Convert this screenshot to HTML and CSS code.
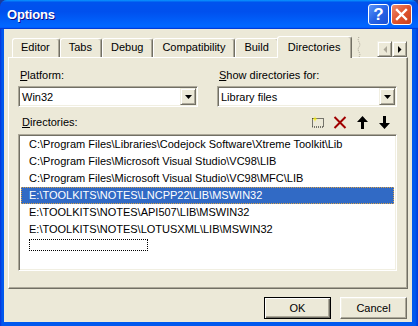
FILE: index.html
```html
<!DOCTYPE html>
<html lang="en">
<head>
  <meta charset="UTF-8">
  <title>Options</title>
  <link rel="stylesheet" href="styles.css">
</head>
<body>
  <div class="window">

    <!-- Title bar -->
    <div class="titlebar">
      <span class="title">Options</span>
      <div class="caption-buttons">
        <div class="cap help">?</div>
        <div class="cap close">
          <svg width="13" height="13" viewBox="0 0 13 13">
            <path d="M2 2 L11 11 M11 2 L2 11" stroke="#fff" stroke-width="2.4" stroke-linecap="square"/>
          </svg>
        </div>
      </div>
    </div>

    <div class="client">

      <!-- Tabs -->
      <div class="tabs">
        <div class="tab">Editor</div>
        <div class="tab">Tabs</div>
        <div class="tab">Debug</div>
        <div class="tab">Compatibility</div>
        <div class="tab">Build</div>
        <div class="tab active">Directories</div>
        <svg class="tab-cut" width="8" height="20" viewBox="0 0 8 20">
          <path d="M4 0 C1 4 7 6 4 10 C1 14 7 16 4 20" fill="none" stroke="#aca899" stroke-dasharray="1 1"/>
        </svg>
        <div class="tab-scroll">
          <div class="scroll-btn">
            <svg width="4" height="7" viewBox="0 0 4 7"><path d="M4 0 V7 L0.5 3.5 Z" fill="#aca899"/></svg>
          </div>
          <div class="scroll-btn">
            <svg width="4" height="7" viewBox="0 0 4 7"><path d="M0 0 V7 L3.5 3.5 Z" fill="#000"/></svg>
          </div>
        </div>
      </div>

      <!-- Tab page -->
      <div class="panel">
        <div class="fields">
          <div class="field">
            <div class="label"><u>P</u>latform:</div>
            <div class="combo">
              <span class="combo-text">Win32</span>
              <div class="drop-btn">
                <svg width="7" height="4" viewBox="0 0 7 4"><path d="M0 0 H7 L3.5 4 Z" fill="#000"/></svg>
              </div>
            </div>
          </div>
          <div class="field">
            <div class="label"><u>S</u>how directories for:</div>
            <div class="combo">
              <span class="combo-text">Library files</span>
              <div class="drop-btn">
                <svg width="7" height="4" viewBox="0 0 7 4"><path d="M0 0 H7 L3.5 4 Z" fill="#000"/></svg>
              </div>
            </div>
          </div>
        </div>

        <div class="list-head">
          <span class="list-label"><u>D</u>irectories:</span>
          <div class="tools">
            <div class="tool">
              <svg width="14" height="12" viewBox="0 0 14 12">
                <rect x="1.5" y="2.5" width="11" height="8.5" fill="none" stroke="#000" stroke-dasharray="1 1"/>
                <path d="M4 0 L4.6 2.4 L7 3 L4.6 3.6 L4 6 L3.4 3.6 L1 3 L3.4 2.4 Z" fill="#f8f000"/>
              </svg>
            </div>
            <div class="tool">
              <svg width="14" height="13" viewBox="0 0 14 13">
                <path d="M1.5 1 L12.5 12 M12.5 1 L1.5 12" stroke="#a00000" stroke-width="2"/>
              </svg>
            </div>
            <div class="tool">
              <svg width="11" height="13" viewBox="0 0 11 13">
                <path d="M5.5 0 L11 6 H7 V13 H4 V6 H0 Z" fill="#000"/>
              </svg>
            </div>
            <div class="tool">
              <svg width="11" height="13" viewBox="0 0 11 13">
                <path d="M5.5 13 L11 7 H7 V0 H4 V7 H0 Z" fill="#000"/>
              </svg>
            </div>
          </div>
        </div>

        <div class="listbox">
          <div class="item">C:\Program Files\Libraries\Codejock Software\Xtreme Toolkit\Lib</div>
          <div class="item">C:\Program Files\Microsoft Visual Studio\VC98\LIB</div>
          <div class="item">C:\Program Files\Microsoft Visual Studio\VC98\MFC\LIB</div>
          <div class="item selected">E:\TOOLKITS\NOTES\LNCPP22\LIB\MSWIN32</div>
          <div class="item">E:\TOOLKITS\NOTES\API507\LIB\MSWIN32</div>
          <div class="item">E:\TOOLKITS\NOTES\LOTUSXML\LIB\MSWIN32</div>
          <div class="item"><div class="new-entry"></div></div>
        </div>
      </div>

      <!-- Dialog buttons -->
      <div class="buttons">
        <div class="btn default">OK</div>
        <div class="btn">Cancel</div>
      </div>

    </div>
  </div>
</body>
</html>
```

FILE: styles.css
```css
* { box-sizing: border-box; }
html, body {
  margin: 0;
  padding: 0;
}

body {
  width: 418px;
  height: 326px;
  overflow: hidden;
  background: #1a3c9c;
  font-family: "Liberation Sans", Arial, sans-serif;
  font-size: 11px;
  color: #000;
}

.window {
  height: 326px;
  display: flex;
  flex-direction: column;
  background: linear-gradient(90deg, #0831d9, #0058ee 2px, #0058ee calc(100% - 3px), #003bda);
  border-radius: 7px 7px 0 0;
  overflow: hidden;
}

/* Title bar */
.titlebar {
  height: 29px;
  flex: none;
  display: flex;
  align-items: center;
  justify-content: space-between;
  padding: 0 6px 0 7px;
  background: linear-gradient(180deg, #0997ff, #0053ee 8%, #0050ee 40%, #0066ff 88%, #0066ff 93%, #005bff 95%, #003dd7 96%, #003dd7);
}

.title {
  color: #fff;
  font-weight: bold;
  font-size: 13px;
  letter-spacing: -0.2px;
  text-shadow: 1px 1px #0f1089;
}

.caption-buttons {
  display: flex;
  gap: 2px;
}

.cap {
  width: 21px;
  height: 21px;
  border: 1px solid #fff;
  border-radius: 3px;
  display: flex;
  align-items: center;
  justify-content: center;
  color: #fff;
}

.help {
  background: linear-gradient(135deg, #5b95f9, #2763e5 50%, #1b50d6);
  font-weight: bold;
  font-size: 17px;
}

.close {
  background: linear-gradient(135deg, #ee8a6c, #e0542f 50%, #c9401c);
}

/* Client area */
.client {
  flex: 1;
  margin: 0 6px 4px 4px;
  padding: 7px 4px 3px;
  background: #ece9d8;
  display: flex;
  flex-direction: column;
}

/* Tabs */
.tabs {
  display: flex;
  align-items: flex-end;
  height: 22px;
  margin-bottom: -1px;
  padding: 0 1px 0 4px;
  position: relative;
  z-index: 1;
}

.tab {
  height: 19px;
  margin-bottom: 1px;
  padding: 0 9px 0 8px;
  line-height: 17px;
  border: 1px solid;
  border-bottom: none;
  border-color: #fff #716f64 transparent #fff;
  border-radius: 3px 3px 0 0;
  box-shadow: inset -1px 0 #aca899;
  white-space: nowrap;
}

.tab.active {
  height: 22px;
  margin: 0 -2px;
  padding: 2px 11px 2px 10px;
  background: #ece9d8;
}

.tab-cut {
  margin: 0 0 1px 5px;
}

.tab-scroll {
  margin-left: auto;
  display: flex;
  margin-bottom: 1px;
}

.scroll-btn {
  width: 15px;
  height: 16px;
  display: flex;
  align-items: center;
  justify-content: center;
  background: #ece9d8;
  border: 1px solid;
  border-color: #f1efe2 #716f64 #716f64 #f1efe2;
  box-shadow: inset 1px 1px #fff, inset -1px -1px #aca899;
}

/* Tab page */
.panel {
  flex: 1;
  padding: 11px 10px 0 9px;
  border: 1px solid;
  border-color: #fff #716f64 #716f64 #fff;
  box-shadow: inset -1px -1px #aca899;
}

.fields {
  display: grid;
  grid-template-columns: 1fr 1fr;
  gap: 19px;
}

.label {
  line-height: 13px;
  padding-left: 2px;
  margin-bottom: 4px;
}

.combo {
  height: 21px;
  display: flex;
  align-items: center;
  background: #fff;
  border: 1px solid;
  border-color: #aca899 #fff #fff #aca899;
  box-shadow: inset 1px 1px #716f64, inset -1px -1px #f1efe2;
}

.combo-text {
  padding-left: 3px;
}

.drop-btn {
  margin-left: auto;
  margin-right: 1px;
  width: 16px;
  height: 17px;
  display: flex;
  align-items: center;
  justify-content: center;
  background: #ece9d8;
  border: 1px solid;
  border-color: #f1efe2 #716f64 #716f64 #f1efe2;
  box-shadow: inset 1px 1px #fff, inset -1px -1px #aca899;
}

/* Directory list */
.list-head {
  height: 16px;
  margin-top: 7px;
  display: flex;
  align-items: center;
  padding: 0 2px 0 4px;
}

.tools {
  margin-left: auto;
  display: flex;
}

.tool {
  width: 22px;
  height: 16px;
  display: flex;
  align-items: center;
  justify-content: center;
}

.listbox {
  height: 137px;
  margin-top: 4px;
  background: #fff;
  border: 1px solid;
  border-color: #aca899 #fff #fff #aca899;
  box-shadow: inset 1px 1px #716f64, inset -1px -1px #f1efe2;
  padding: 1px 2px;
}

.item {
  height: 17px;
  line-height: 17px;
  padding-left: 8px;
  white-space: nowrap;
}

.item.selected {
  background: #316ac5;
  color: #fff;
  outline: 1px dotted #d8a24a;
  outline-offset: -1px;
}

.new-entry {
  width: 119px;
  height: 12px;
  margin-top: 1px;
  border: 1px dotted #000;
}

/* Dialog buttons */
.buttons {
  margin-top: 8px;
  display: flex;
  justify-content: flex-end;
  gap: 9px;
  padding-right: 1px;
}

.btn {
  width: 67px;
  height: 22px;
  display: flex;
  align-items: center;
  justify-content: center;
  background: #ece9d8;
  border: 1px solid;
  border-color: #fff #716f64 #716f64 #fff;
  box-shadow: inset -1px -1px #aca899, inset 1px 1px #f1efe2;
}

.btn.default {
  border-color: #000;
  box-shadow: inset 1px 1px #fff, inset -1px -1px #716f64, inset -2px -2px #aca899;
}
```
